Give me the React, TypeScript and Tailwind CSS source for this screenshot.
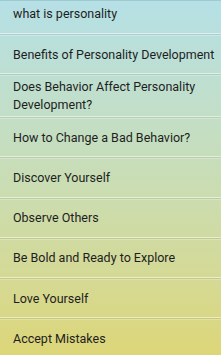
import React from "react";

const items = [
  "Benefits of Personality Development",
  "Does Behavior Affect Personality Development?",
  "How to Change a Bad Behavior?",
  "Discover Yourself",
  "Observe Others",
  "Be Bold and Ready to Explore",
  "Love Yourself",
  "Accept Mistakes",
];

function Divider() {
  return (
    <div className="flex flex-col">
      <div className="h-px bg-white/50" />
      <div className="h-px bg-[#000000]/[0.07]" />
      <div className="h-px bg-white/25" />
    </div>
  );
}

export default function App() {
  return (
    <div
      className="w-full h-[355px] overflow-hidden bg-linear-to-b from-[#b5e0e6] via-[#c9ddb5] to-[#ddd678] text-[#1e1e1e]"
      style={{ fontFamily: "Roboto, 'Noto Sans', sans-serif" }}
    >
      <div className="h-px bg-[#9fcbd0]" />
      <div className="h-[32px] flex items-center pb-[7px] pl-[13px] pr-[4px] text-[12.5px] leading-[18px]">
        what is personality
      </div>
      <Divider />
      {items.map((t, i) => (
        <React.Fragment key={t}>
          <div className="min-h-[37.2px] flex items-center py-[2px] pl-[13px] pr-[4px] text-[12.5px] leading-[18px]">
            {t}
          </div>
          {i < items.length - 1 && <Divider />}
        </React.Fragment>
      ))}
    </div>
  );
}
